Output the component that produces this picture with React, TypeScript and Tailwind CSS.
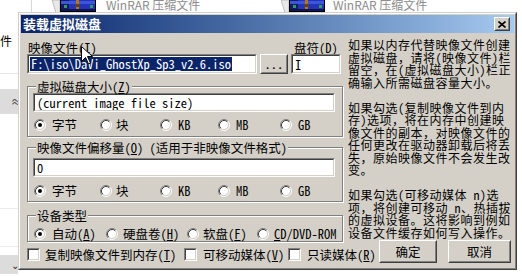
import React from "react";

function Sunken({ className = "", children }: { className?: string; children?: React.ReactNode }) {
  return (
    <div className={`border border-t-[#808080] border-l-[#808080] border-b-white border-r-white ${className}`}>
      <div className="flex h-full w-full items-center overflow-hidden border border-t-[#404040] border-l-[#404040] border-b-[#d4d0c8] border-r-[#d4d0c8] bg-white">
        {children}
      </div>
    </div>
  );
}

function Raised({ className = "", children }: { className?: string; children?: React.ReactNode }) {
  return (
    <div className={`border border-t-white border-l-white border-b-[#404040] border-r-[#404040] ${className}`}>
      <div className="flex h-full w-full items-center justify-center border border-t-[#d4d0c8] border-l-[#d4d0c8] border-b-[#808080] border-r-[#808080] bg-[#d4d0c8]">
        {children}
      </div>
    </div>
  );
}

function Acc({ t, k, tail = "" }: { t: string; k: string; tail?: string }) {
  return (
    <span className="whitespace-pre">
      {t}(<u>{k}</u>){tail}
    </span>
  );
}

function Radio({ checked = false }: { checked?: boolean }) {
  return (
    <svg width="12" height="12" viewBox="0 0 12 12" className="shrink-0">
      <circle cx="6" cy="6" r="4.5" fill="#ffffff" />
      <path d="M2.11 9.89A5.5 5.5 0 0 1 9.89 2.11" stroke="#808080" fill="none" />
      <path d="M9.89 2.11A5.5 5.5 0 0 1 2.11 9.89" stroke="#ffffff" fill="none" />
      <path d="M2.82 9.18A4.5 4.5 0 0 1 9.18 2.82" stroke="#404040" fill="none" />
      <path d="M9.18 2.82A4.5 4.5 0 0 1 2.82 9.18" stroke="#d4d0c8" fill="none" />
      {checked && <circle cx="6" cy="6" r="2" fill="#000000" />}
    </svg>
  );
}

function Check() {
  return <Sunken className="h-[13px] w-[13px] shrink-0" />;
}

function Group({ legend, className = "", children }: { legend: React.ReactNode; className?: string; children?: React.ReactNode }) {
  return (
    <div className={`relative border border-[#808080] shadow-[inset_1px_1px_0_#ffffff,1px_1px_0_#ffffff] ${className}`}>
      <span className="absolute -top-[7px] left-[8px] bg-[#d4d0c8] px-[1px] leading-[13px] whitespace-pre">{legend}</span>
      {children}
    </div>
  );
}

function UnitRow() {
  return (
    <div className="flex h-[13px] items-center whitespace-pre">
      <div className="flex w-[66px] items-center gap-[6px]"><Radio checked /><span>字节</span></div>
      <div className="flex w-[60px] items-center gap-[4px]"><Radio /><span>块</span></div>
      <div className="flex w-[58px] items-center gap-[6px]"><Radio /><span>KB</span></div>
      <div className="flex w-[62px] items-center gap-[6px]"><Radio /><span>MB</span></div>
      <div className="flex items-center gap-[6px]"><Radio /><span>GB</span></div>
    </div>
  );
}

function WinRarIcon() {
  return (
    <svg width="44" height="17" viewBox="0 0 44 17" className="shrink-0">
      <path d="M0 4 L8 4 L8 17 L4 17 Z" fill="#e8e8e8" stroke="#9a9a9a" strokeWidth="0.6" />
      <rect x="8.5" y="0.5" width="35" height="15" fill="#2433b8" stroke="#000000" />
      <rect x="9" y="1" width="8" height="14" fill="#141a6a" />
      <rect x="9" y="5" width="34" height="3" fill="#3d55d8" />
      <rect x="12" y="9" width="3" height="3" fill="#2fa05a" />
      <rect x="24" y="1" width="3" height="14" fill="#b8741e" />
      <rect x="23" y="8" width="5" height="3" fill="#5a4030" />
      <rect x="9" y="13" width="34" height="2" fill="#0f1550" />
      <rect x="38" y="9" width="3" height="3" fill="#2fa05a" />
    </svg>
  );
}

const help = [
  "如果以内存代替映像文件创建",
  "虚拟磁盘，请将(映像文件)栏",
  "留空，在(虚拟磁盘大小)栏正",
  "确输入所需磁盘容量大小。",
  "",
  "如果勾选(复制映像文件到内",
  "存)选项，将在内存中创建映",
  "像文件的副本，对映像文件的",
  "任何更改在驱动器卸载后将丢",
  "失，原始映像文件不会发生改",
  "变。",
  "",
  "如果勾选(可移动媒体 n)选",
  "项，将创建可移动 n、热插拔",
  "的虚拟设备。这将影响到例如",
  "设备文件缓存如何写入操作。",
];

export default function App() {
  return (
    <div className="relative h-[276px] w-[522px] overflow-hidden bg-white font-['Noto_Sans_CJK_SC',sans-serif]">
      {/* background list view */}
      <div className="flex flex-col">
        <div className="-mt-[4px] flex h-[17px] items-center">
          <div className="w-[31px]" />
          <div className="h-[17px] w-px bg-[#d8d8d8]" />
          <div className="w-[20px]" />
          <div className="flex w-[229px] items-center">
            <WinRarIcon />
            <span className="ml-[10px] text-[12px] leading-[13px] text-[#8c8c8c]">WinRAR 压缩文件</span>
          </div>
          <div className="flex items-center">
            <WinRarIcon />
            <span className="ml-[8px] text-[12px] leading-[13px] text-[#8c8c8c]">WinRAR 压缩文件</span>
          </div>
        </div>
        <div className="flex w-[18px] flex-col">
          <span className="mt-[21px] text-[12px] leading-[13px] text-black">件</span>
          <div className="mt-[26px] h-px bg-[#e6e6e6]" />
          <div className="mt-[15px] flex h-[25px] items-center bg-[#dcdcdc] pl-[11px] text-[10px] leading-[10px] text-[#333]">≈</div>
          <div className="mt-[94px] h-px bg-[#ececec]" />
          <div className="mt-[37px] h-px bg-[#ececec]" />
          <div className="mt-[8px] flex h-[19px] items-center bg-[#dcdcdc] pl-[11px] text-[10px] leading-[10px] text-[#333]">⌄</div>
        </div>
      </div>

      {/* dialog window */}
      <div className="absolute left-[18px] top-[12px] h-[258px] w-[499px] border border-t-[#d4d0c8] border-l-[#d4d0c8] border-b-[#404040] border-r-[#404040]">
        <div className="flex h-full w-full flex-col border border-t-white border-l-white border-b-[#808080] border-r-[#808080] bg-[#d4d0c8] p-[1px] font-['Noto_Sans_Mono_CJK_SC','Noto_Sans_CJK_SC',monospace] text-[12.5px] leading-[13px] text-black">
          {/* title bar */}
          <div className="flex h-[18px] shrink-0 items-center bg-linear-to-r from-[#0a246a] to-[#a6caf0] pl-[2px] pr-[4px]">
            <span className="font-['Noto_Sans_CJK_SC',sans-serif] text-[13px] font-bold leading-[18px] text-white">装载虚拟磁盘</span>
            <Raised className="ml-auto h-[14px] w-[16px]">
              <svg width="8" height="7" viewBox="0 0 8 7">
                <path d="M0.5 0.5 L7.5 6.5 M7.5 0.5 L0.5 6.5" stroke="#000" strokeWidth="1.6" />
              </svg>
            </Raised>
          </div>

          {/* body */}
          <div className="flex flex-1 pl-[6px]">
            {/* left column */}
            <div className="flex w-[316px] flex-col pt-[8px]">
              <div className="flex items-end gap-[3px]">
                <div className="flex w-[230px] flex-col">
                  <span className="pl-[1px]"><Acc t="映像文件" k="I" /></span>
                  <Sunken className="h-[20px] w-[230px]">
                    <span className="ml-[1px] inline-block h-[14px] bg-[#0a246a] px-[1px] leading-[14px] text-white whitespace-pre">F:\iso\DaVi_GhostXp_Sp3_v2.6.iso</span>
                  </Sunken>
                </div>
                <Raised className="h-[20px] w-[28px]">
                  <span className="leading-[10px]">...</span>
                </Raised>
                <div className="flex w-[50px] flex-col">
                  <span className="pl-[3px]"><Acc t="盘符" k="D" /></span>
                  <Sunken className="h-[20px] w-[50px]">
                    <span className="pl-[2px]">I</span>
                  </Sunken>
                </div>
              </div>

              <Group className="mt-[12px] w-[316px] px-[5px] pb-[5px] pt-[6px]" legend={<Acc t="虚拟磁盘大小" k="Z" />}>
                <Sunken className="h-[19px] w-[302px]">
                  <span className="pl-[2px] whitespace-pre">(current image file size)</span>
                </Sunken>
                <div className="mt-[6px] pl-[1px]">
                  <UnitRow />
                </div>
              </Group>

              <Group className="mt-[10px] w-[316px] px-[5px] pb-[4px] pt-[10px]" legend={<><Acc t="映像文件偏移量" k="O" /> (适用于非映像文件格式)</>}>
                <Sunken className="h-[19px] w-[302px]">
                  <span className="pl-[2px]">0</span>
                </Sunken>
                <div className="mt-[7px] pl-[1px]">
                  <UnitRow />
                </div>
              </Group>

              <Group className="mt-[13px] w-[316px] px-[6px] pb-[1px] pt-[11px]" legend="设备类型">
                <div className="flex h-[13px] items-center whitespace-pre">
                  <div className="flex w-[72px] shrink-0 items-center gap-[6px]"><Radio checked /><Acc t="自动" k="A" /></div>
                  <div className="flex w-[81px] shrink-0 items-center gap-[5px]"><Radio /><Acc t="硬盘卷" k="H" /></div>
                  <div className="flex w-[70px] shrink-0 items-center gap-[4px]"><Radio /><Acc t="软盘" k="F" /></div>
                  <div className="flex shrink-0 items-center gap-[5px]"><Radio /><span className="whitespace-pre"><u>C</u>D/DVD-ROM</span></div>
                </div>
              </Group>

              <div className="mt-[6px] flex h-[13px] w-max items-center whitespace-pre">
                <div className="flex w-[157px] items-center gap-[5px]"><Check /><Acc t="复制映像文件到内存" k="T" /></div>
                <div className="flex w-[104px] items-center gap-[6px]"><Check /><Acc t="可移动媒体" k="V" /></div>
                <div className="flex items-center gap-[6px]"><Check /><Acc t="只读媒体" k="R" /></div>
              </div>
            </div>

            {/* right column */}
            <div className="ml-[5px] flex w-[165px] flex-col pt-[6px]">
              <div className="flex flex-col text-[12px] leading-[12.5px] tracking-[0.5px]">
                {help.map((l, i) => (
                  <div key={i} className="h-[12.5px] whitespace-pre">{l}</div>
                ))}
              </div>
              <div className="mt-[1px] flex justify-end gap-[11px] pr-[2px]">
                <Raised className="h-[23px] w-[58px]"><span>确定</span></Raised>
                <Raised className="h-[23px] w-[63px]"><span>取消</span></Raised>
              </div>
            </div>
          </div>
        </div>
      </div>

      {/* mouse cursor */}
      <svg width="12" height="19" viewBox="0 0 12 19" className="absolute left-[81px] top-[46px]">
        <path d="M0.5 0.5 L0.5 15.5 L4.5 11.5 L7.5 18 L9.5 17 L6.5 10.5 L11.5 10.5 Z" fill="#ffffff" stroke="#000000" strokeWidth="1" />
      </svg>
    </div>
  );
}
